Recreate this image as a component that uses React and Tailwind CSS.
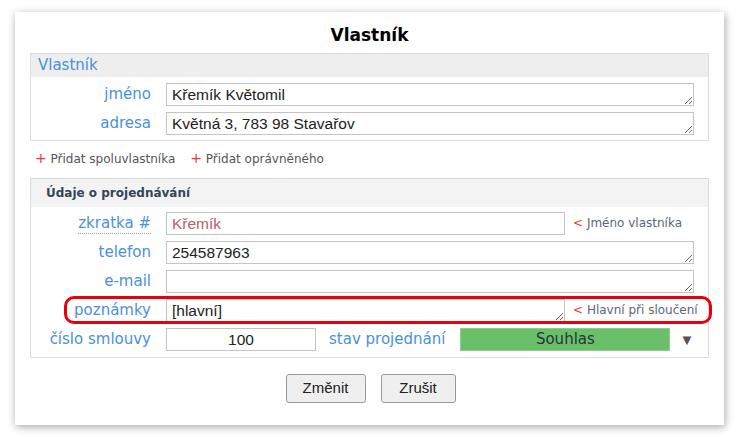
import React from "react";

const label = "font-['DejaVu_Sans',sans-serif] text-[15px] text-[#4a8fe0] leading-[23px]";
const field =
  "h-[23px] border border-[#c4c4c4] bg-white px-[5px] py-0 text-[15.5px] leading-[21px] text-[#222] font-['Liberation_Sans',Arial,sans-serif] outline-none";

// one labelled row of the form
const Row = ({ name, children, dotted, className = "" }) => (
  <div className={`flex h-[23px] items-center ${className}`}>
    <div className={`${label} h-[23px] w-[120px] shrink-0 text-right`}>
      <span className={dotted ? "inline-block h-[22px] border-b border-dotted border-[#9aa5b1] leading-[22px]" : ""}>
        {name}
      </span>
    </div>
    <div className="ml-[15px] flex flex-1 items-center">{children}</div>
  </div>
);

const Hint = ({ children }) => (
  <span className="ml-[8px] font-['DejaVu_Sans',sans-serif] text-[12px] leading-[23px] text-[#5b6677] whitespace-nowrap">
    <span className="text-[#e53935]">&lt;</span> {children}
  </span>
);

const Area = ({ value, className = "flex-1" }) => (
  <textarea
    rows={1}
    defaultValue={value}
    className={`${field} ${className} block resize-y overflow-hidden`}
  />
);

export default function App() {
  return (
    <div className="min-h-[437px] bg-white pl-[15px] pt-[12px]">
      <div className="w-[709px] h-[413px] bg-white shadow-[1px_2px_8px_rgba(0,0,0,0.35)] px-[15px] pt-[12px]">
        <h1 className="h-[22px] text-center font-['DejaVu_Sans',sans-serif] text-[17px] font-bold leading-[22px] text-black">
          Vlastník
        </h1>

        {/* owner section */}
        <div className="mt-[7px] border border-[#dcdcdc]">
          <div className="h-[23px] bg-[#eeeeee] pl-[7px] font-['DejaVu_Sans',sans-serif] text-[15px] leading-[23px] text-[#4a8fe0]">
            Vlastník
          </div>
          <div className="flex flex-col gap-[6px] pb-[5px] pr-[14px] pt-[6px]">
            <Row name="jméno">
              <Area value="Křemík Květomil" />
            </Row>
            <Row name="adresa">
              <Area value="Květná 3, 783 98 Stavařov" />
            </Row>
          </div>
        </div>

        <div className="flex gap-[15px] pb-[11px] pl-[5px] pt-[9px] font-['DejaVu_Sans',sans-serif] text-[12px] leading-[16px] text-[#555]">
          <span>
            <span className="text-[#e53935] text-[14px]">+</span> Přidat spoluvlastníka
          </span>
          <span>
            <span className="text-[#e53935] text-[14px]">+</span> Přidat oprávněného
          </span>
        </div>

        {/* negotiation section */}
        <div className="border border-[#dcdcdc]">
          <div className="h-[28px] bg-[#f3f3f3] pl-[15px] font-['DejaVu_Sans',sans-serif] text-[12px] font-bold leading-[28px] text-[#34465a]">
            Údaje o projednávání
          </div>
          <div className="flex flex-col gap-[6px] pb-[6px] pr-[14px] pt-[5px]">
            <Row name="zkratka #" dotted>
              <input
                defaultValue="Křemík"
                className={`${field} w-[399px] text-[#b8606e]`}
              />
              <Hint>Jméno vlastníka</Hint>
            </Row>
            <Row name="telefon">
              <Area value="254587963" />
            </Row>
            <Row name="e-mail">
              <Area value="" />
            </Row>
            <Row name="poznámky" className="relative">
              <Area value="[hlavní]" className="w-[399px]" />
              <Hint>Hlavní při sloučení</Hint>
              <div className="pointer-events-none absolute -bottom-[2px] -right-[18px] -top-[3px] left-[33px] rounded-[10px] border-[3px] border-[#e8000b]" />
            </Row>
            <Row name="číslo smlouvy">
              <input defaultValue="100" className={`${field} w-[150px] text-center`} />
              <span className={`${label} ml-[13px] whitespace-nowrap`}>stav projednání</span>
              <div className="ml-[15px] h-[23px] w-[210px] border border-[#8fce8d] bg-[#6abf69] text-center font-['DejaVu_Sans',sans-serif] text-[15px] leading-[21px] text-[#26343c]">
                Souhlas
              </div>
              <span className="ml-[9px] text-[15px] leading-[23px] text-[#555]">▼</span>
            </Row>
          </div>
        </div>

        <div className="mt-[16px] flex justify-center gap-[15px] pl-[2px]">
          <button className="h-[29px] w-[80px] rounded-[3px] border border-[#9a9a9a] bg-[#efefef] font-['Liberation_Sans',Arial,sans-serif] text-[15px] text-[#222]">
            Změnit
          </button>
          <button className="h-[29px] w-[75px] rounded-[3px] border border-[#9a9a9a] bg-[#efefef] font-['Liberation_Sans',Arial,sans-serif] text-[15px] text-[#222]">
            Zrušit
          </button>
        </div>
      </div>
    </div>
  );
}
